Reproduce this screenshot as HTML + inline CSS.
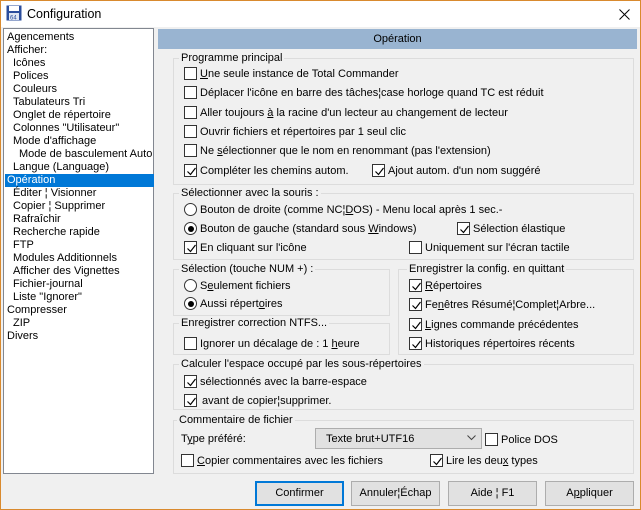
<!DOCTYPE html>
<html><head><meta charset="utf-8"><style>
*{box-sizing:border-box;margin:0;padding:0}
body{width:641px;height:510px;overflow:hidden;font-family:"Liberation Sans",sans-serif;font-size:11px;color:#000;background:#f0f0f0;position:relative}
.win{position:absolute;left:0;top:0;width:641px;height:510px;border:1px solid #d98a2e;background:#f0f0f0}
.title{position:absolute;left:0;top:0;width:639px;height:26px;background:#fff}
.a{position:absolute;white-space:nowrap;line-height:13px}
.tree{position:absolute;left:2px;top:27px;width:151px;height:446px;background:#fff;border:1px solid #828790}
.tree div{position:absolute;white-space:nowrap;line-height:13px;font-size:11px}
.hdr{position:absolute;left:157px;top:28px;width:479px;height:20px;background:#99b4d1;text-align:center;line-height:21px;font-size:11px}
.g{position:absolute;border:1px solid #dcdcdc}
.gl{position:absolute;background:#f0f0f0;padding:0 2px;white-space:nowrap;line-height:13px;font-size:11px}
.cb{position:absolute;width:13px;height:13px;border:1px solid #333;background:#fff}
.cb svg{position:absolute;left:1px;top:1px}
.rb{position:absolute;width:13px;height:13px;border:1px solid #333;border-radius:50%;background:#fff}
.rb.on::after{content:"";position:absolute;left:2.5px;top:2.5px;width:6px;height:6px;border-radius:50%;background:#000}
.t{position:absolute;white-space:nowrap;line-height:13px;font-size:11px;margin-top:1px}
.btn{position:absolute;top:480px;height:25px;width:89px;border:1px solid #adadad;background:#e1e1e1;text-align:center;line-height:23px;font-size:11px}
u{text-decoration:underline}
</style></head><body>
<div class="win">
<div class="title"></div>
<svg style="position:absolute;left:5px;top:4px" width="16" height="16" viewBox="0 0 16 16"><rect x="0.5" y="0.5" width="15" height="15" fill="#2b4d9c"/><rect x="3" y="1" width="10" height="5" fill="#fff"/><rect x="3" y="8" width="10" height="7" fill="#dfe6f2"/><text x="4" y="14.5" font-size="6" font-family="Liberation Sans" fill="#2b4d9c">64</text></svg>
<div class="a" style="left:26px;top:6px;font-size:12.5px;line-height:15px">Configuration</div>
<svg style="position:absolute;left:618px;top:8px" width="11" height="11"><path d="M0.5 0.5L10.5 10.5M10.5 0.5L0.5 10.5" stroke="#000" stroke-width="1"/></svg>

<div class="tree">
<div style="left:3px;top:2px">Agencements</div>
<div style="left:3px;top:15px">Afficher:</div>
<div style="left:9px;top:28px">Icônes</div>
<div style="left:9px;top:41px">Polices</div>
<div style="left:9px;top:54px">Couleurs</div>
<div style="left:9px;top:67px">Tabulateurs Tri</div>
<div style="left:9px;top:80px">Onglet de répertoire</div>
<div style="left:9px;top:93px">Colonnes "Utilisateur"</div>
<div style="left:9px;top:106px">Mode d'affichage</div>
<div style="left:15px;top:119px">Mode de basculement Auto</div>
<div style="left:9px;top:132px">Langue (Language)</div>
<div style="left:1px;top:145px;width:149px;height:13px;background:#0078d7;color:#fff;padding-left:2px">Opération</div>
<div style="left:9px;top:158px">Éditer ¦ Visionner</div>
<div style="left:9px;top:171px">Copier ¦ Supprimer</div>
<div style="left:9px;top:184px">Rafraîchir</div>
<div style="left:9px;top:197px">Recherche rapide</div>
<div style="left:9px;top:210px">FTP</div>
<div style="left:9px;top:223px">Modules Additionnels</div>
<div style="left:9px;top:236px">Afficher des Vignettes</div>
<div style="left:9px;top:249px">Fichier-journal</div>
<div style="left:9px;top:262px">Liste "Ignorer"</div>
<div style="left:3px;top:275px">Compresser</div>
<div style="left:9px;top:288px">ZIP</div>
<div style="left:3px;top:301px">Divers</div>
</div>

<div class="hdr">Opération</div>

<div class="g" style="left:172px;top:57px;width:461px;height:127px"></div>
<div class="gl" style="left:178px;top:51px">Programme principal</div>
<div class="g" style="left:172px;top:192px;width:461px;height:67px"></div>
<div class="gl" style="left:178px;top:186px">Sélectionner avec la souris :</div>
<div class="g" style="left:172px;top:268px;width:217px;height:47px"></div>
<div class="gl" style="left:178px;top:262px">Sélection (touche NUM +) :</div>
<div class="g" style="left:397px;top:268px;width:236px;height:86px"></div>
<div class="gl" style="left:406px;top:262px">Enregistrer la config. en quittant</div>
<div class="g" style="left:172px;top:322px;width:217px;height:32px"></div>
<div class="gl" style="left:178px;top:316px">Enregistrer correction NTFS...</div>
<div class="g" style="left:172px;top:363px;width:461px;height:46px"></div>
<div class="gl" style="left:178px;top:357px">Calculer l'espace occupé par les sous-répertoires</div>
<div class="g" style="left:172px;top:419px;width:461px;height:54px"></div>
<div class="gl" style="left:176px;top:413px">Commentaire de fichier</div>

<div class="cb" style="left:183px;top:66px"></div><div class="t" style="left:199px;top:66px"><u>U</u>ne seule instance de Total Commander</div>
<div class="cb" style="left:183px;top:85px"></div><div class="t" style="left:199px;top:85px">Déplacer l'icône en barre des tâches¦case horloge quand TC est réduit</div>
<div class="cb" style="left:183px;top:105px"></div><div class="t" style="left:199px;top:105px">Aller toujours <u>à</u> la racine d'un lecteur au changement de lecteur</div>
<div class="cb" style="left:183px;top:124px"></div><div class="t" style="left:199px;top:124px">Ouvrir fichiers et répertoires par 1 seul clic</div>
<div class="cb" style="left:183px;top:143px"></div><div class="t" style="left:199px;top:143px">Ne <u>s</u>électionner que le nom en renommant (pas l'extension)</div>
<div class="cb" style="left:183px;top:163px"><svg width="11" height="11"><path d="M1.5 5.5L4.5 8.5L9.5 2" fill="none" stroke="#000" stroke-width="1.2"/></svg></div><div class="t" style="left:199px;top:163px">Compléter les chemins autom.</div>
<div class="cb" style="left:371px;top:163px"><svg width="11" height="11"><path d="M1.5 5.5L4.5 8.5L9.5 2" fill="none" stroke="#000" stroke-width="1.2"/></svg></div><div class="t" style="left:387px;top:163px">Ajout autom. d'un nom suggéré</div>

<div class="rb" style="left:183px;top:202px"></div><div class="t" style="left:199px;top:202px">Bouton de droite (comme NC¦<u>D</u>OS) - Menu local après 1 sec.-</div>
<div class="rb on" style="left:183px;top:221px"></div><div class="t" style="left:199px;top:221px">Bouton de gauche (standard sous <u>W</u>indows)</div>
<div class="cb" style="left:456px;top:221px"><svg width="11" height="11"><path d="M1.5 5.5L4.5 8.5L9.5 2" fill="none" stroke="#000" stroke-width="1.2"/></svg></div><div class="t" style="left:472px;top:221px">Sélection élastique</div>
<div class="cb" style="left:183px;top:240px"><svg width="11" height="11"><path d="M1.5 5.5L4.5 8.5L9.5 2" fill="none" stroke="#000" stroke-width="1.2"/></svg></div><div class="t" style="left:199px;top:240px">En cliquant sur l'icône</div>
<div class="cb" style="left:408px;top:240px"></div><div class="t" style="left:424px;top:240px">Uniquement sur l'écran tactile</div>

<div class="rb" style="left:183px;top:278px"></div><div class="t" style="left:199px;top:278px">S<u>e</u>ulement fichiers</div>
<div class="rb on" style="left:183px;top:296px"></div><div class="t" style="left:199px;top:296px">Aussi répert<u>o</u>ires</div>

<div class="cb" style="left:408px;top:278px"><svg width="11" height="11"><path d="M1.5 5.5L4.5 8.5L9.5 2" fill="none" stroke="#000" stroke-width="1.2"/></svg></div><div class="t" style="left:424px;top:278px"><u>R</u>épertoires</div>
<div class="cb" style="left:408px;top:297px"><svg width="11" height="11"><path d="M1.5 5.5L4.5 8.5L9.5 2" fill="none" stroke="#000" stroke-width="1.2"/></svg></div><div class="t" style="left:424px;top:297px">Fe<u>n</u>êtres Résumé¦Complet¦Arbre...</div>
<div class="cb" style="left:408px;top:317px"><svg width="11" height="11"><path d="M1.5 5.5L4.5 8.5L9.5 2" fill="none" stroke="#000" stroke-width="1.2"/></svg></div><div class="t" style="left:424px;top:317px"><u>L</u>ignes commande précédentes</div>
<div class="cb" style="left:408px;top:336px"><svg width="11" height="11"><path d="M1.5 5.5L4.5 8.5L9.5 2" fill="none" stroke="#000" stroke-width="1.2"/></svg></div><div class="t" style="left:424px;top:336px">Historiques répertoires récents</div>

<div class="cb" style="left:183px;top:336px"></div><div class="t" style="left:199px;top:336px">Ignorer un décalage de : 1 <u>h</u>eure</div>

<div class="cb" style="left:183px;top:374px"><svg width="11" height="11"><path d="M1.5 5.5L4.5 8.5L9.5 2" fill="none" stroke="#000" stroke-width="1.2"/></svg></div><div class="t" style="left:199px;top:374px">sélectionnés avec la barre-espace</div>
<div class="cb" style="left:183px;top:393px"><svg width="11" height="11"><path d="M1.5 5.5L4.5 8.5L9.5 2" fill="none" stroke="#000" stroke-width="1.2"/></svg></div><div class="t" style="left:201px;top:393px">avant de copier¦supprimer.</div>

<div class="t" style="left:180px;top:431px">T<u>y</u>pe préféré:</div>
<div style="position:absolute;left:314px;top:427px;width:167px;height:21px;border:1px solid #adadad;background:#e1e1e1"></div>
<div class="t" style="left:325px;top:431px">Texte brut+UTF16</div>
<svg style="position:absolute;left:466px;top:434px" width="9" height="6"><path d="M0.5 0.5L4.5 4.5L8.5 0.5" fill="none" stroke="#444"/></svg>
<div class="cb" style="left:484px;top:432px"></div><div class="t" style="left:500px;top:432px">Police DOS</div>
<div class="cb" style="left:180px;top:453px"></div><div class="t" style="left:196px;top:453px"><u>C</u>opier commentaires avec les fichiers</div>
<div class="cb" style="left:429px;top:453px"><svg width="11" height="11"><path d="M1.5 5.5L4.5 8.5L9.5 2" fill="none" stroke="#000" stroke-width="1.2"/></svg></div><div class="t" style="left:445px;top:453px">Lire les deu<u>x</u> types</div>

<div class="btn" style="left:254px;border:2px solid #0078d7;line-height:21px">Confirmer</div>
<div class="btn" style="left:350px">Annuler¦Échap</div>
<div class="btn" style="left:447px">Aide ¦ F1</div>
<div class="btn" style="left:544px">A<u>p</u>pliquer</div>
</div>
</body></html>
